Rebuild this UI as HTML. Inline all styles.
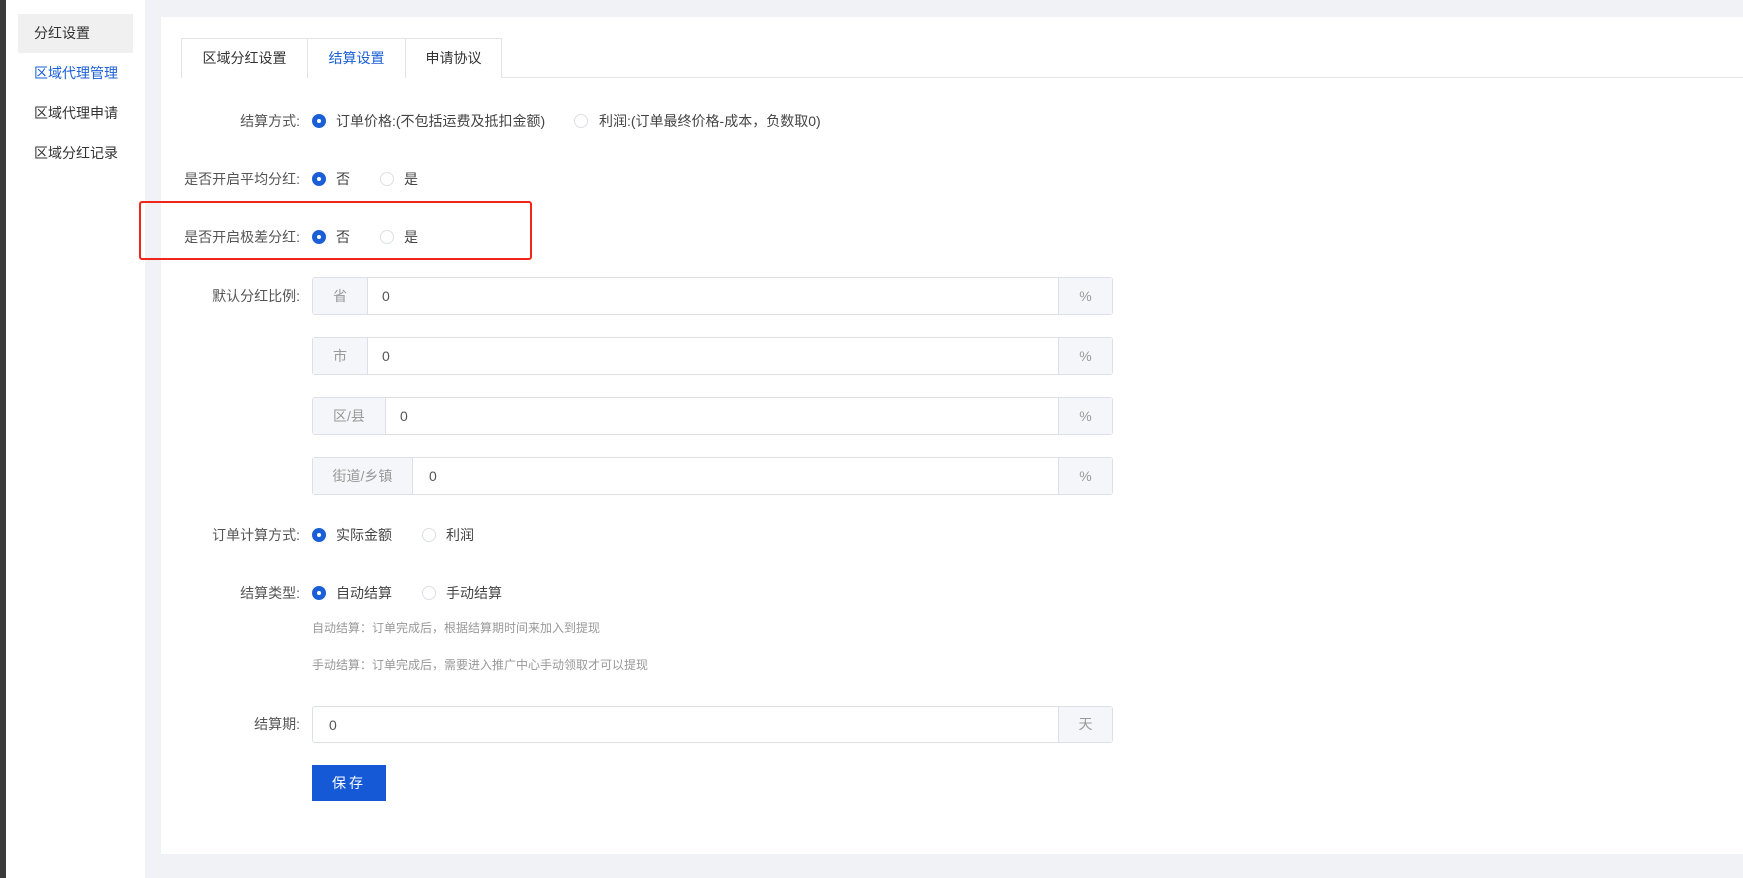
<!DOCTYPE html>
<html><head><meta charset="utf-8"><style>
*{box-sizing:border-box;margin:0;padding:0}
body{width:1743px;height:878px;background:#f0f2f5;font-family:"Liberation Sans","Noto Sans CJK SC",sans-serif;font-size:14px;color:#333;position:relative;overflow:hidden}
.abs{position:absolute}
.strip{left:0;top:0;width:6px;height:878px;background:#3a3a3a}
.side{left:6px;top:0;width:139px;height:878px;background:#fff}
.act{left:18px;top:14px;width:115px;height:39px;background:#f0f0f0}
.card{left:161px;top:17px;width:1582px;height:837px;background:#fff}
.tab{position:absolute;top:0;height:40px;border:1px solid #e2e4e8;border-bottom:none;line-height:38px;text-align:center;font-size:14px;background:#fff;color:#333}
.tabline{left:181px;top:77px;width:1562px;height:1px;background:#e2e4e8}
.lbl{position:absolute;right:1443px;text-align:right;font-size:14px;color:#555;line-height:20px;white-space:nowrap}
.r{position:absolute;width:14px;height:14px;border-radius:50%;border:1px solid #dcdfe6;background:#fff}
.r.on{background:#1a5fd6;border-color:#1a5fd6}
.r.on:after{content:"";position:absolute;left:4px;top:4px;width:4px;height:4px;border-radius:50%;background:#fff}
.t{position:absolute;font-size:14px;color:#444;line-height:20px;white-space:nowrap}
.inp{position:absolute;left:312px;width:801px;height:38px;border:1px solid #dcdfe6;border-radius:3px;background:#fff}
.pre{position:absolute;left:0;top:0;height:36px;background:#f5f6f9;border-right:1px solid #dcdfe6;color:#999;text-align:center;line-height:36px;font-size:14px}
.suf{position:absolute;right:0;top:0;width:54px;height:36px;background:#f5f6f9;border-left:1px solid #dcdfe6;color:#999;text-align:center;line-height:36px;font-size:14px}
.val{position:absolute;top:0;line-height:36px;color:#555;font-size:14px}
.hint{position:absolute;left:312px;font-size:12px;color:#999;line-height:16px}
</style></head><body>
<div class="abs strip"></div>
<div class="abs side"></div>
<div class="abs act"></div>
<div class="abs" style="left:34px;top:23px;font-size:14px;color:#333;line-height:20px">分红设置</div>
<div class="abs" style="left:34px;top:63px;font-size:14px;color:#1a5fd6;line-height:20px">区域代理管理</div>
<div class="abs" style="left:34px;top:103px;font-size:14px;color:#333;line-height:20px">区域代理申请</div>
<div class="abs" style="left:34px;top:143px;font-size:14px;color:#333;line-height:20px">区域分红记录</div>

<div class="abs card"></div>
<div class="abs tabline"></div>
<div class="tab" style="left:181px;top:38px;width:127px">区域分红设置</div>
<div class="tab" style="left:307px;top:38px;width:99px;color:#1a5fd6">结算设置</div>
<div class="tab" style="left:405px;top:38px;width:97px">申请协议</div>

<div class="lbl" style="top:111px">结算方式:</div>
<div class="r on" style="left:312px;top:114px"></div><div class="t" style="left:336px;top:111px">订单价格:(不包括运费及抵扣金额)</div>
<div class="r" style="left:574px;top:114px"></div><div class="t" style="left:599px;top:111px">利润:(订单最终价格-成本，负数取0)</div>

<div class="lbl" style="top:169px">是否开启平均分红:</div>
<div class="r on" style="left:312px;top:172px"></div><div class="t" style="left:336px;top:169px">否</div>
<div class="r" style="left:380px;top:172px"></div><div class="t" style="left:404px;top:169px">是</div>

<div class="abs" style="left:139px;top:201px;width:393px;height:59px;border:2px solid #f0261c;border-radius:3px"></div>
<div class="lbl" style="top:227px">是否开启极差分红:</div>
<div class="r on" style="left:312px;top:230px"></div><div class="t" style="left:336px;top:227px">否</div>
<div class="r" style="left:380px;top:230px"></div><div class="t" style="left:404px;top:227px">是</div>

<div class="lbl" style="top:286px">默认分红比例:</div>
<div class="inp" style="top:277px"><div class="pre" style="width:55px">省</div><div class="val" style="left:69px">0</div><div class="suf">%</div></div>
<div class="inp" style="top:337px"><div class="pre" style="width:55px">市</div><div class="val" style="left:69px">0</div><div class="suf">%</div></div>
<div class="inp" style="top:397px"><div class="pre" style="width:73px">区/县</div><div class="val" style="left:87px">0</div><div class="suf">%</div></div>
<div class="inp" style="top:457px"><div class="pre" style="width:100px">街道/乡镇</div><div class="val" style="left:116px">0</div><div class="suf">%</div></div>

<div class="lbl" style="top:525px">订单计算方式:</div>
<div class="r on" style="left:312px;top:528px"></div><div class="t" style="left:336px;top:525px">实际金额</div>
<div class="r" style="left:422px;top:528px"></div><div class="t" style="left:446px;top:525px">利润</div>

<div class="lbl" style="top:583px">结算类型:</div>
<div class="r on" style="left:312px;top:586px"></div><div class="t" style="left:336px;top:583px">自动结算</div>
<div class="r" style="left:422px;top:586px"></div><div class="t" style="left:446px;top:583px">手动结算</div>
<div class="hint" style="top:620px">自动结算：订单完成后，根据结算期时间来加入到提现</div>
<div class="hint" style="top:657px">手动结算：订单完成后，需要进入推广中心手动领取才可以提现</div>

<div class="lbl" style="top:714px">结算期:</div>
<div class="inp" style="top:706px;height:37px"><div class="val" style="left:16px">0</div><div class="suf" style="height:35px;line-height:35px">天</div></div>

<div class="abs" style="left:312px;top:765px;width:74px;height:36px;background:#1559d6;color:#fff;text-align:center;line-height:36px;font-size:14px;letter-spacing:3px">保存</div>
</body></html>
